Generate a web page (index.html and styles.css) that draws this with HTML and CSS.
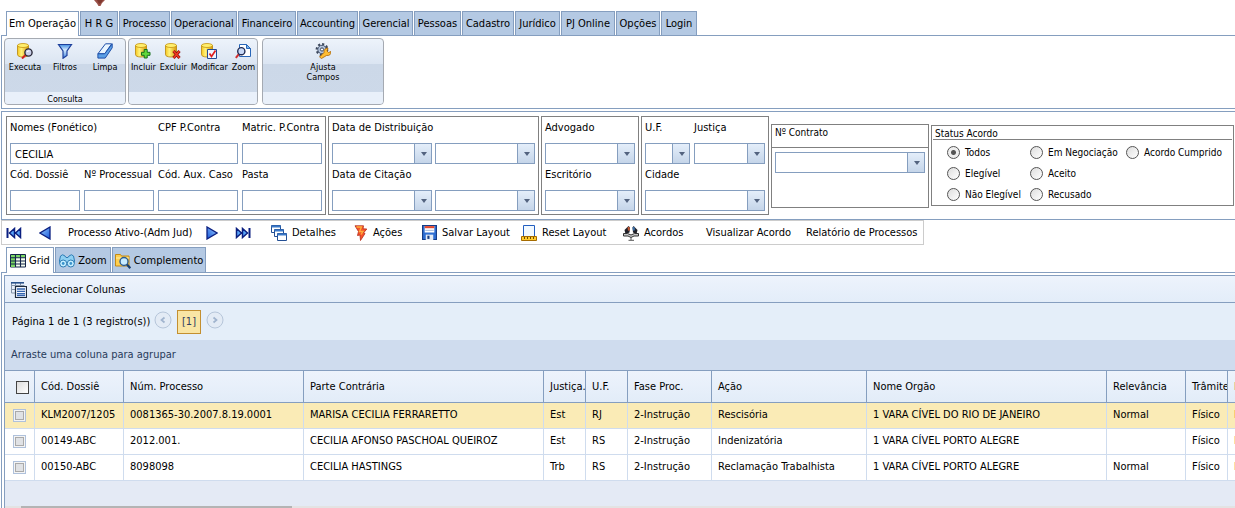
FILE: index.html
```html
<!DOCTYPE html>
<html lang="pt-BR">
<head>
<meta charset="utf-8">
<title>Processos - Em Operação</title>
<link rel="stylesheet" href="styles.css">
</head>
<body>
<svg class="defs" aria-hidden="true">
  <defs>
    <linearGradient id="gold" x1="0" x2="1"><stop offset="0" stop-color="#f5c61c"/><stop offset=".35" stop-color="#fff27a"/><stop offset="1" stop-color="#d99a06"/></linearGradient>
    <linearGradient id="blue" x1="0" y1="0" x2="1" y2="1"><stop offset="0" stop-color="#9cd0ff"/><stop offset="1" stop-color="#1554d8"/></linearGradient>
    <linearGradient id="glass" x1="0" y1="0" x2="0" y2="1"><stop offset="0" stop-color="#3f8be0"/><stop offset=".4" stop-color="#d6ecff"/><stop offset="1" stop-color="#3a7ed8"/></linearGradient>
    <g id="db"><path d="M.5 2.500v9c0 1.500 2 2.500 5.500 2.500s5.500-1 5.500-2.500v-9z" fill="url(#gold)" stroke="#b8860b" stroke-width=".8"/><ellipse cx="6" cy="2.500" rx="5.500" ry="2" fill="#ffef6e" stroke="#c79410" stroke-width=".8"/></g>
    <symbol id="i-exec" viewBox="0 0 16 16"><use href="#db"/><path d="M8.500 12 5 15.500" stroke="#d02020" stroke-width="2"/><circle cx="11.500" cy="9.500" r="3.600" fill="#c9cfe8" stroke="#2b2b3a" stroke-width="1.400"/><path d="M10 9q1-1.500 2.500-1" stroke="#fff" fill="none"/></symbol>
    <symbol id="i-filter" viewBox="0 0 16 16"><path d="M1.500 1.500h13l-4.500 6.500v4.500l-4 2.800V8z" fill="url(#glass)" stroke="#1d3f9c" stroke-width="1.200"/></symbol>
    <symbol id="i-erase" viewBox="0 0 16 16"><path d="M8.500.800h6.200l-7 10H.900z" fill="#e9f5ff" stroke="#1f4fa8"/><path d="M.900 10.800h6.800l7.500-10v4l-7 10.300H.900z" fill="#5ba0e6" stroke="#1f4fa8"/></symbol>
    <symbol id="i-add" viewBox="0 0 16 16"><use href="#db"/><path d="M9.200 6.500h3v2.800H15v3h-2.800V15h-3v-2.700H6.500v-3h2.700z" fill="#62d83a" stroke="#16701a"/></symbol>
    <symbol id="i-del" viewBox="0 0 16 16"><use href="#db"/><path d="m8.500 8 6 7M14.500 8l-6 7" stroke="#8e1010" stroke-width="3"/><path d="m8.500 8 6 7M14.500 8l-6 7" stroke="#f03a20" stroke-width="1.500"/></symbol>
    <symbol id="i-edit" viewBox="0 0 16 16"><use href="#db"/><path d="M6.500 6.500h9v9h-9z" fill="#eef5ff" stroke="#234a94"/><path d="m8.500 10.500 2 3 4-6" stroke="#e02020" stroke-width="1.700" fill="none"/></symbol>
    <symbol id="i-zoom" viewBox="0 0 16 16"><path d="M4.500 1.500h7l4 4v8h-11z" fill="#fff" stroke="#2866b8"/><path d="M11.500 1.500v4h4z" fill="#78b3ec" stroke="#2866b8"/><path d="M4 11 .800 14.800" stroke="#d03030" stroke-width="2"/><circle cx="6.300" cy="8.200" r="3.600" fill="#c8d9f6" stroke="#222d55" stroke-width="1.400"/></symbol>
    <symbol id="i-gear" viewBox="0 0 16 16"><circle cx="7" cy="6.500" r="5.200" fill="none" stroke="#3c485c" stroke-width="2.400" stroke-dasharray="2.100 1.900"/><circle cx="7" cy="6.500" r="4.200" fill="#b4c4dc" stroke="#4b5a74"/><circle cx="7" cy="6.500" r="1.600" fill="#fff" stroke="#3c485c"/><path d="M6.500 15.500 4.500 14l4.500-4.500q-.5-4 4-4.500l-1 3 1.500 1.500 2.500-1q0 4.500-4.500 4z" fill="#ffbd32" stroke="#a86306" stroke-width=".8"/></symbol>
    <symbol id="i-prev" viewBox="0 0 12 14"><path d="M11 1v12L1 7z" fill="url(#blue)" stroke="#0a1f80" stroke-width="1.300"/></symbol>
    <symbol id="i-first" viewBox="0 0 16 12"><path d="M1.500 1v10" stroke="#0a1f80" stroke-width="2"/><path d="M8.500 1.500v9L3.500 6zM14.500 1.500v9L9.500 6z" fill="#5aa6fa" stroke="#0a1f80" stroke-width="1.500"/></symbol>
    <symbol id="i-detail" viewBox="0 0 16 16"><g fill="#fff" stroke="#234f94"><path d="M.500.500h9v7h-9z"/><path d="M.500 1.500h9" stroke="#3978c8" stroke-width="2"/><path d="M3.500 4.500h9v7h-9z"/><path d="M3.500 5.500h9" stroke="#3978c8" stroke-width="2"/><path d="M6.500 8.500h9v7h-9z"/><path d="M6.500 9.500h9" stroke="#3978c8" stroke-width="2"/></g></symbol>
    <symbol id="i-bolt" viewBox="0 0 14 16"><path d="M1 .800h8.500l-.5 3 3.800.2-3.300 4 1.500.5-4.500 7-.5-5.500-2.500.5 1-4z" fill="#f6542b" stroke="#b42818" stroke-width=".8"/><path d="M2.500 2h5l-2 4.500h3.500L7 9.500" stroke="#ffb03c" stroke-width="1.300" fill="none"/></symbol>
    <symbol id="i-save" viewBox="0 0 14 14"><path d="M.500.500h13v13h-13z" fill="#2e6ed2" stroke="#153c86"/><path d="M2.500 1h9v6h-9z" fill="#fff"/><path d="M2.500 1h9v2h-9z" fill="#e2472f"/><path d="M3 5h8" stroke="#a9bddb"/><path d="M3.500 9h7v5h-7z" fill="#e4ebf4"/><path d="M5 10h2v3H5z" fill="#163b80"/></symbol>
    <symbol id="i-reset" viewBox="0 0 16 16"><path d="M2.500.500h11v11h-11z" fill="#f2f9ff" stroke="#225ec0"/><path d="M.500 11.500h15v4H.500z" fill="#ffcc2e" stroke="#a56b00"/><path d="M3.500 12v2M6.500 12v2M9.500 12v2M12.500 12v2" stroke="#704800"/></symbol>
    <symbol id="i-deal" viewBox="0 0 16 16"><path d="M5.500 1 1.500 5l1 4 4-1.500.5-5zM10.500 1l4 4-1 4-3.500-1.500-.5-5z" fill="#202028"/><path d="m5.500 2 .5 3.500" stroke="#c55a35" stroke-width="2"/><path d="m10.500 2 .5 3.500" stroke="#3c70a8" stroke-width="2"/><path d="M.500 8.500h4L8 10l3.500-1.500h4v2.500H11l-3 1.500L5 11H.500z" fill="#c8c8c8" stroke="#333"/><path d="M8 12v3M5.500 15.300h5.500" stroke="#555"/></symbol>
    <symbol id="i-grid" viewBox="0 0 16 14"><path d="M.500.500h15v12.500H.500z" fill="#f6fff0" stroke="#14244a"/><path d="M1 1h14v2.500H1zM1 3.500h4V13H1z" fill="#7cd864"/><path d="M0 3.800h16M0 7h16M0 10h16M5.500 0v13M10.500 0v13" stroke="#14244a" stroke-width="1.100"/></symbol>
    <symbol id="i-binoc" viewBox="0 0 16 14"><path d="M1.500 2q2-2.500 4.500 0l1 1.500h2L10 2q2.500-2.500 4.500 0L16 9H0z" fill="#8ed0f2" stroke="#2e7cb4"/><circle cx="4.200" cy="9.500" r="3.500" fill="#c7efff" stroke="#2e7cb4"/><circle cx="11.800" cy="9.500" r="3.500" fill="#c7efff" stroke="#2e7cb4"/><circle cx="4.200" cy="9.500" r="1.400" fill="#3b93cc"/><circle cx="11.800" cy="9.500" r="1.400" fill="#3b93cc"/></symbol>
    <symbol id="i-folder" viewBox="0 0 16 16"><path d="M.500 13V1.500h5l1 1.500H14v10z" fill="#ffcf4f" stroke="#c48a15"/><path d="M1 5h13" stroke="#fff0a8"/><circle cx="9" cy="8.500" r="4" fill="#c8ecff" stroke="#2d5d92" stroke-width="1.400"/><path d="m12 11.500 3.300 3.700" stroke="#173f70" stroke-width="2.200"/></symbol>
    <symbol id="i-cols" viewBox="0 0 16 16"><path d="M.500 1v10H4M.500 3.500h13M4.500.500v3M9.500.500v3M.500 7.500H4" fill="none" stroke="#8494a8"/><path d="M0 .800h13" stroke="#29538c" stroke-width="1.600"/><path d="M4.500 4.500h11v11h-11z" fill="#f4f8ff" stroke="#1c2a3c" stroke-width="1.200"/><path d="M6 7h8M6 9.300h8M6 11.600h8M6 13.500h8" stroke="#3566b0" stroke-width="1.300"/></symbol>
    <symbol id="i-left" viewBox="0 0 18 18"><circle cx="9" cy="9" r="8" fill="#e3ebf5" stroke="#b6c6da"/><path d="m10.500 6.500-3 2.500 3 2.500" fill="none" stroke="#a0b4ce" stroke-width="1.700"/></symbol>
  </defs>
</svg>

<header class="brand"><svg class="brand-tip" viewBox="0 0 12 6" aria-hidden="true"><path d="M0 0h11L8 3 6.500 6h-2L3 3.500z" fill="#9a5148"/><path d="M3 0h6L7 3 5 4z" fill="#7f382f"/></svg></header>

<nav class="tabs main-tabs">
  <a class="tab active" href="#">Em Operação</a><a class="tab" href="#">H R G</a><a class="tab" href="#">Processo</a><a class="tab" href="#">Operacional</a><a class="tab" href="#">Financeiro</a><a class="tab" href="#">Accounting</a><a class="tab" href="#">Gerencial</a><a class="tab" href="#">Pessoas</a><a class="tab" href="#">Cadastro</a><a class="tab" href="#">Jurídico</a><a class="tab" href="#">PJ Online</a><a class="tab" href="#">Opções</a><a class="tab" href="#">Login</a>
</nav>

<section class="ribbon">
  <div class="group group-query">
    <div class="tools">
      <button class="tool"><svg><use href="#i-exec"/></svg>Executa</button>
      <button class="tool"><svg><use href="#i-filter"/></svg>Filtros</button>
      <button class="tool"><svg><use href="#i-erase"/></svg>Limpa</button>
    </div>
    <div class="group-name">Consulta</div>
  </div>
  <div class="group group-edit">
    <div class="tools">
      <button class="tool"><svg><use href="#i-add"/></svg>Incluir</button>
      <button class="tool"><svg><use href="#i-del"/></svg>Excluir</button>
      <button class="tool"><svg><use href="#i-edit"/></svg>Modificar</button>
      <button class="tool"><svg><use href="#i-zoom"/></svg>Zoom</button>
    </div>
    <div class="group-name"></div>
  </div>
  <div class="group group-fields">
    <div class="tools">
      <button class="tool"><svg><use href="#i-gear"/></svg>Ajusta<br>Campos</button>
    </div>
    <div class="group-name"></div>
  </div>
</section>

<form class="filters">
  <div class="box box-names">
    <div class="field wide"><label for="nome">Nomes (Fonético)</label><input id="nome" type="text" value="CECILIA"></div>
    <div class="field"><label for="cpf">CPF P.Contra</label><input id="cpf" type="text"></div>
    <div class="field"><label for="mat">Matric. P.Contra</label><input id="mat" type="text"></div>
    <div class="field"><label for="dos">Cód. Dossiê</label><input id="dos" type="text"></div>
    <div class="field"><label for="nproc">Nº Processual</label><input id="nproc" type="text"></div>
    <div class="field"><label for="aux">Cód. Aux. Caso</label><input id="aux" type="text"></div>
    <div class="field"><label for="pasta">Pasta</label><input id="pasta" type="text"></div>
  </div>
  <div class="box box-dates">
    <div class="field"><label for="dist1">Data de Distribuição</label><div class="pair"><div class="combo"><select id="dist1"></select></div><div class="combo"><select aria-label="Data de Distribuição final"></select></div></div></div>
    <div class="field"><label for="cit1">Data de Citação</label><div class="pair"><div class="combo"><select id="cit1"></select></div><div class="combo"><select aria-label="Data de Citação final"></select></div></div></div>
  </div>
  <div class="box box-lawyer">
    <div class="field"><label for="adv">Advogado</label><div class="combo"><select id="adv"></select></div></div>
    <div class="field"><label for="esc">Escritório</label><div class="combo"><select id="esc"></select></div></div>
  </div>
  <div class="box box-place">
    <div class="field"><label for="uf">U.F.</label><div class="combo"><select id="uf"></select></div></div>
    <div class="field"><label for="jus">Justiça</label><div class="combo"><select id="jus"></select></div></div>
    <div class="field wide"><label for="cid">Cidade</label><div class="combo"><select id="cid"></select></div></div>
  </div>
  <div class="contract">
    <label for="contrato">Nº Contrato</label>
    <div class="contract-body"><div class="combo"><select id="contrato"></select></div></div>
  </div>
  <div class="status" role="radiogroup" aria-labelledby="status-title">
    <div class="status-title" id="status-title">Status Acordo</div>
    <div class="radios">
      <label><input type="radio" name="st" checked>Todos</label>
      <label><input type="radio" name="st">Em Negociação</label>
      <label><input type="radio" name="st">Acordo Cumprido</label>
      <label><input type="radio" name="st">Elegível</label>
      <label class="next-row"><input type="radio" name="st">Aceito</label>
      <label class="first-col"><input type="radio" name="st">Não Elegível</label>
      <label><input type="radio" name="st">Recusado</label>
    </div>
  </div>
</form>

<div class="menu">
  <button aria-label="Primeiro"><svg class="i-ends"><use href="#i-first"/></svg></button>
  <button aria-label="Anterior"><svg class="i-arrow"><use href="#i-prev"/></svg></button>
  <span>Processo Ativo-(Adm Jud)</span>
  <button aria-label="Próximo"><svg class="i-arrow flip"><use href="#i-prev"/></svg></button>
  <button aria-label="Último"><svg class="i-ends flip"><use href="#i-first"/></svg></button>
  <button><svg><use href="#i-detail"/></svg>Detalhes</button>
  <button><svg class="i-bolt"><use href="#i-bolt"/></svg>Ações</button>
  <button><svg class="i-save"><use href="#i-save"/></svg>Salvar Layout</button>
  <button><svg><use href="#i-reset"/></svg>Reset Layout</button>
  <button><svg><use href="#i-deal"/></svg>Acordos</button>
  <button>Visualizar Acordo</button>
  <button>Relatório de Processos</button>
</div>

<nav class="tabs view-tabs">
  <a class="tab active" href="#"><svg><use href="#i-grid"/></svg>Grid</a><a class="tab" href="#"><svg><use href="#i-binoc"/></svg>Zoom</a><a class="tab" href="#"><svg><use href="#i-folder"/></svg>Complemento</a>
</nav>

<main class="view">
  <div class="grid">
    <div class="grid-bar"><button><svg><use href="#i-cols"/></svg>Selecionar Colunas</button></div>
    <div class="pager"><span>Página 1 de 1 (3 registro(s))</span><button aria-label="Página anterior"><svg><use href="#i-left"/></svg></button><b class="page">[1]</b><button aria-label="Próxima página"><svg class="flip"><use href="#i-left"/></svg></button></div>
    <div class="group-by">Arraste uma coluna para agrupar</div>
    <table>
      <colgroup><col class="c-check"><col class="c-code"><col class="c-num"><col class="c-xl"><col class="c-s"><col class="c-s"><col class="c-fase"><col class="c-acao"><col class="c-xl"><col class="c-rel"><col class="c-s"><col class="c-xl"></colgroup>
      <thead><tr><th><input type="checkbox" aria-label="Selecionar todos"></th><th>Cód. Dossiê</th><th>Núm. Processo</th><th>Parte Contrária</th><th>Justiça.</th><th>U.F.</th><th>Fase Proc.</th><th>Ação</th><th>Nome Orgão</th><th>Relevância</th><th>Trâmite</th><th>I</th></tr></thead>
      <tbody>
        <tr class="selected"><td><input type="checkbox" aria-label="Selecionar KLM2007/1205"></td><td>KLM2007/1205</td><td>0081365-30.2007.8.19.0001</td><td>MARISA CECILIA FERRARETTO</td><td>Est</td><td>RJ</td><td>2-Instrução</td><td>Rescisória</td><td>1 VARA CÍVEL DO RIO DE JANEIRO</td><td>Normal</td><td>Físico</td><td>I</td></tr>
        <tr><td><input type="checkbox" aria-label="Selecionar 00149-ABC"></td><td>00149-ABC</td><td>2012.001.</td><td>CECILIA AFONSO PASCHOAL QUEIROZ</td><td>Est</td><td>RS</td><td>2-Instrução</td><td>Indenizatória</td><td>1 VARA CÍVEL PORTO ALEGRE</td><td></td><td>Físico</td><td>I</td></tr>
        <tr><td><input type="checkbox" aria-label="Selecionar 00150-ABC"></td><td>00150-ABC</td><td>8098098</td><td>CECILIA HASTINGS</td><td>Trb</td><td>RS</td><td>2-Instrução</td><td>Reclamação Trabalhista</td><td>1 VARA CÍVEL PORTO ALEGRE</td><td>Normal</td><td>Físico</td><td>I</td></tr>
      </tbody>
    </table>
    <div class="scrollbar"><div class="thumb"></div></div>
  </div>
</main>
</body>
</html>
```
FILE: styles.css
```css
* { box-sizing: border-box; }
html, body { height: 100%; }
body {
  margin: 0;
  display: flex;
  flex-direction: column;
  overflow: hidden;
  background: #fff;
  color: #000;
  font: 11px/16px "DejaVu Sans Condensed", Tahoma, "DejaVu Sans", sans-serif;
}
body > * { flex: none; }
button, input, select { font: inherit; color: inherit; }
button { border: 0; padding: 0; background: none; white-space: nowrap; }
svg { flex: none; width: 16px; height: 16px; }
.defs { position: absolute; width: 0; height: 0; }
.flip { transform: scaleX(-1); }

.brand { height: 11px; padding-left: 94px; }
.brand-tip { display: block; width: 12px; height: 6px; }

/* Tabs */
.tabs {
  display: grid;
  gap: 1px;
  margin-left: 1px;
  padding-left: 5px;
  border-bottom: 1px solid #859ebf;
}
.main-tabs { grid-template-columns: 73px 38px 51px 66px 58px 61px 54px 47px 52px 45px 54px 44px 36px; }
.view-tabs { grid-template-columns: 48px 56px 94px; margin-top: 2px; }
.tab {
  display: flex;
  align-items: center;
  justify-content: center;
  gap: 3px;
  height: 24px;
  border: 1px solid #859ebf;
  border-bottom: 0;
  background: #b4c9e3;
  color: #000;
  text-decoration: none;
  white-space: nowrap;
}
.view-tabs .tab { height: 25px; }
.view-tabs .tab, .main-tabs .tab { padding-top: 1px; }
.tabs .tab.active { background: #fff; margin-bottom: -1px; height: auto; padding-top: 0; }

/* Ribbon */
.ribbon {
  display: flex;
  gap: 2px;
  margin-left: 1px;
  padding: 2px 3px 3px 2px;
  border: solid #859ebf;
  border-width: 0 0 1px 1px;
}
.group {
  display: flex;
  flex-direction: column;
  height: 67px;
  border: 1px solid #a5aab2;
  border-radius: 4px;
  overflow: hidden;
  background: linear-gradient(#edf3fb, #dbe5f2 25px, #ccd8e8 25px, #cdd9e9);
}
.group-query { width: 122px; }
.group-edit { width: 130px; }
.group-fields { width: 122px; margin-left: 2px; }
.tools { flex: 1; display: flex; justify-content: space-around; padding-top: 4px; }
.group-query .tools { display: grid; grid-template-columns: repeat(3, 1fr); }
.tool {
  display: flex;
  flex-direction: column;
  align-items: center;
  justify-content: flex-start;
  gap: 3px;
  font-size: 9px;
  line-height: 10px;
}
.tool svg { margin-bottom: 0; }
.group-name { height: 12px; background: #e9f0fa; text-align: center; font-size: 9px; line-height: 14px; }

/* Filters */
.filters {
  display: flex;
  align-items: center;
  gap: 2px;
  margin: 2px 0 0 1px;
  padding: 4px 1px 4px 4px;
  border: solid #859ebf;
  border-width: 1px 0 1px 1px;
}
.filters > * { flex: none; }
.filters label { white-space: nowrap; }
.box { display: grid; gap: 2px 4px; padding: 3px 3px 3px; border: 1px solid #808080; }
.box-names { grid-template-columns: 70px 70px 80px 80px; }
.box-dates { grid-template-columns: 203px; }
.box-lawyer { grid-template-columns: 90px; }
.box-place { grid-template-columns: 45px 71px; }
.wide { grid-column: span 2; }
.field { display: flex; flex-direction: column; gap: 7px; }
.box .field + .field { min-width: 0; }
.pair { display: flex; gap: 3px; }
input[type="text"] {
  width: 100%;
  height: 21px;
  padding: 1px 4px 0;
  border: 1px solid #859ebf;
  border-radius: 0;
  background: #fff;
}
.box { grid-auto-rows: 44px; row-gap: 3px; }
.combo { position: relative; flex: 1; height: 21px; }
.field > .combo { flex: none; }
.combo select {
  display: block;
  width: 100%;
  height: 21px;
  padding: 0 20px 0 4px;
  border: 1px solid #859ebf;
  border-radius: 0;
  background: #fff;
  appearance: none;
}
.combo::before {
  content: "";
  position: absolute;
  inset: 1px 1px 1px auto;
  width: 16px;
  border-left: 1px solid #859ebf;
  background: linear-gradient(#e4eefa, #c5d5e9);
  pointer-events: none;
}
.combo::after {
  content: "";
  position: absolute;
  top: 9px;
  right: 5px;
  border: solid transparent;
  border-width: 4px 3px 0;
  border-top-color: #53637f;
  pointer-events: none;
}
.contract { width: 158px; border: 1px solid #808080; font-size: 10px; }
.contract label { display: block; height: 23px; padding: 0 3px; line-height: 15px; border-bottom: 1px solid #808080; }
.contract-body { height: 59px; padding: 4px 3px; }
.status { width: 303px; height: 81px; padding: 0 1px; border: 1px solid #808080; font-size: 10px; }
.status-title { padding-left: 2px; height: 14px; line-height: 16px; border-bottom: 1px solid #808080; }
.radios { display: grid; grid-template-columns: 83px 96px 1fr; grid-auto-rows: 21px; padding: 2px 0 0 14px; }
.radios label { display: flex; align-items: center; gap: 5px; }
.radios .next-row { grid-column: 2; }
.radios .first-col { grid-column: 1; }
input[type="radio"] {
  appearance: none;
  flex: none;
  width: 13px;
  height: 13px;
  margin: 0;
  border: 1px solid #555;
  border-radius: 50%;
  background: linear-gradient(135deg, #ddd, #fff);
}
input[type="radio"]:checked { background: radial-gradient(#555 0 2px, #eee 3px); }

/* Record menu */
.menu {
  display: grid;
  grid-template-columns: 33px 29px 138px 29px 36px 83px 68px 99px 102px 83px 100px 117px;
  align-items: center;
  align-self: flex-start;
  height: 25px;
  margin-left: 1px;
  padding-left: 4px;
  border: 1px solid #ccc;
  white-space: nowrap;
}
.menu button { display: flex; align-items: center; gap: 5px; }
.menu .i-ends { height: 12px; }
.menu .i-arrow { width: 12px; height: 14px; }
.menu .i-bolt { width: 14px; }
.menu .i-save { width: 15px; height: 15px; }

/* Grid */
.view { flex: 1; display: flex; margin-left: 1px; padding: 2px 0 0 2px; border-left: 1px solid #859ebf; min-height: 0; }
.grid {
  flex: 1;
  min-width: 0;
  display: flex;
  flex-direction: column;
  overflow: hidden;
  border: solid #859ebf;
  border-width: 1px 0 0 1px;
  background: #e4eaf5;
}
.grid > * { flex: none; }
.grid-bar { height: 27px; padding: 5px 6px; border-bottom: 1px solid #859ebf; background: linear-gradient(#edf3fc, #e3edf9); }
.grid-bar button { display: flex; align-items: center; gap: 4px; line-height: 18px; }
.pager { display: flex; align-items: center; height: 37px; padding-left: 7px; background: #e4eef9; white-space: nowrap; }
.pager span { width: 142px; }
.pager button { margin-bottom: 4px; }
.pager svg { display: block; width: 18px; height: 18px; }
.page { margin: 0 5px; padding: 3px 4px; border: 1px solid #c38f30; background: #f9e5a4; color: #304060; font-weight: normal; }
.group-by { height: 30px; padding-left: 6px; line-height: 29px; background: #cfdcee; color: #283b5b; }
table { width: 1463px; table-layout: fixed; border-collapse: separate; border-spacing: 0; }
.c-check { width: 30px; }
.c-code { width: 89px; }
.c-num { width: 180px; }
.c-xl { width: 240px; }
.c-s { width: 42px; }
.c-fase { width: 84px; }
.c-acao { width: 155px; }
.c-rel { width: 79px; }
th, td { padding: 0 0 0 6px; overflow: hidden; text-align: left; font-weight: normal; white-space: nowrap; }
th { height: 33px; padding-top: 1px; border: solid #859ebf; border-width: 1px 1px 1px 0; background: linear-gradient(#edf3fc, #e2ecf8); }
td { height: 26px; padding-bottom: 1px; border: solid #cfdcee; border-width: 0 1px 1px 0; background: #fff; }
.selected td { background: #faebb6; }
th:first-child { padding-left: 11px; }
td:first-child { padding: 0 0 0 8px; }
input[type="checkbox"] {
  appearance: none;
  display: block;
  width: 13px;
  height: 13px;
  margin: 0;
  border: 1px solid #444;
  background: linear-gradient(135deg, #ddd, #fff);
}
td input[type="checkbox"] { border-color: #afc1db; background: #e0e2e5; box-shadow: inset 0 0 0 1px #f4f4f4, inset 0 0 0 2px #aaa; }
.scrollbar { height: 17px; margin-top: 25px; padding-left: 16px; background: #e3e3e3; }
.thumb { width: 271px; height: 100%; background: #b4b4b4; }
```
